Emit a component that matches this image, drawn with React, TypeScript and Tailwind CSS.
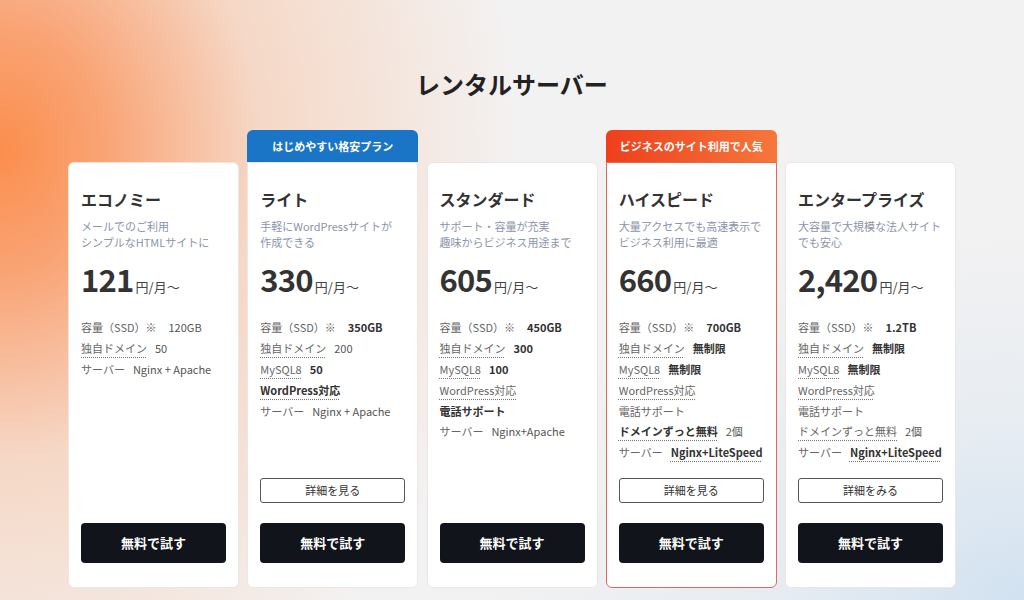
type Spec = {
  label: string
  value?: string
  labelBold?: boolean
  valueBold?: boolean
  dotted?: boolean
  valueDotted?: boolean
}

type Plan = {
  name: string
  desc: string[]
  price: string
  badge?: "blue" | "orange"
  badgeText?: string
  detail?: string
  specs: Spec[]
}

const plans: Plan[] = [
  {
    name: "エコノミー",
    desc: ["メールでのご利用", "シンプルなHTMLサイトに"],
    price: "121",
    specs: [
      { label: "容量（SSD）※", value: "120GB" },
      { label: "独自ドメイン", value: "50", dotted: true },
      { label: "サーバー", value: "Nginx + Apache" },
    ],
  },
  {
    name: "ライト",
    desc: ["手軽にWordPressサイトが", "作成できる"],
    price: "330",
    badge: "blue",
    badgeText: "はじめやすい格安プラン",
    detail: "詳細を見る",
    specs: [
      { label: "容量（SSD）※", value: "350GB", valueBold: true },
      { label: "独自ドメイン", value: "200", dotted: true },
      { label: "MySQL8", value: "50", dotted: true, valueBold: true },
      { label: "WordPress対応", dotted: true, labelBold: true },
      { label: "サーバー", value: "Nginx + Apache" },
    ],
  },
  {
    name: "スタンダード",
    desc: ["サポート・容量が充実", "趣味からビジネス用途まで"],
    price: "605",
    specs: [
      { label: "容量（SSD）※", value: "450GB", valueBold: true },
      { label: "独自ドメイン", value: "300", dotted: true, valueBold: true },
      { label: "MySQL8", value: "100", dotted: true, valueBold: true },
      { label: "WordPress対応", dotted: true },
      { label: "電話サポート", labelBold: true },
      { label: "サーバー", value: "Nginx+Apache" },
    ],
  },
  {
    name: "ハイスピード",
    desc: ["大量アクセスでも高速表示で", "ビジネス利用に最適"],
    price: "660",
    badge: "orange",
    badgeText: "ビジネスのサイト利用で人気",
    detail: "詳細を見る",
    specs: [
      { label: "容量（SSD）※", value: "700GB", valueBold: true },
      { label: "独自ドメイン", value: "無制限", dotted: true, valueBold: true },
      { label: "MySQL8", value: "無制限", dotted: true, valueBold: true },
      { label: "WordPress対応", dotted: true },
      { label: "電話サポート" },
      { label: "ドメインずっと無料", value: "2個", dotted: true, labelBold: true },
      { label: "サーバー", value: "Nginx+LiteSpeed", valueBold: true, valueDotted: true },
    ],
  },
  {
    name: "エンタープライズ",
    desc: ["大容量で大規模な法人サイト", "でも安心"],
    price: "2,420",
    detail: "詳細をみる",
    specs: [
      { label: "容量（SSD）※", value: "1.2TB", valueBold: true },
      { label: "独自ドメイン", value: "無制限", dotted: true, valueBold: true },
      { label: "MySQL8", value: "無制限", dotted: true, valueBold: true },
      { label: "WordPress対応", dotted: true },
      { label: "電話サポート" },
      { label: "ドメインずっと無料", value: "2個", dotted: true },
      { label: "サーバー", value: "Nginx+LiteSpeed", valueBold: true, valueDotted: true },
    ],
  },
]

const dottedCls = "underline decoration-dotted decoration-[#777] underline-offset-[4px]"

function SpecRow({ spec }: { spec: Spec }) {
  return (
    <div className="flex items-center gap-2 h-[20.8px] text-[11px] leading-[20px] whitespace-nowrap">
      <span
        className={`${spec.labelBold ? "font-bold text-[#333]" : "text-[#666]"} ${spec.dotted ? dottedCls : ""}`}
      >
        {spec.label}
      </span>
      {spec.value && (
        <span
          className={`${spec.valueBold ? "font-bold text-[#333]" : "text-[#555]"} ${spec.valueDotted ? dottedCls : ""} ${spec.label.startsWith("容量") ? "ml-1" : ""}`}
        >
          {spec.value}
        </span>
      )}
    </div>
  )
}

function PlanCard({ plan }: { plan: Plan }) {
  const hot = plan.badge === "orange"
  return (
    <div className="flex flex-col w-[171px]">
      {plan.badge ? (
        <div
          className={`h-8 rounded-t-md flex items-center justify-center text-white text-[11px] font-bold ${
            hot ? "bg-[linear-gradient(90deg,#ee3f1d,#f6773b)]" : "bg-[#1a75c6]"
          }`}
        >
          {plan.badgeText}
        </div>
      ) : (
        <div className="h-8" />
      )}
      <div
        className={`h-[426px] bg-white flex flex-col px-3 pt-6 pb-6 border ${
          plan.badge ? "rounded-b-md" : "rounded-md"
        } ${hot ? "border-[#df6a55]" : "border-[#ebe7e5]"}`}
      >
        <h3 className="text-[16px] leading-6 font-bold text-[#333]">{plan.name}</h3>
        <div className="mt-[7px] text-[11px] leading-4 text-[#8a94ab] whitespace-nowrap">
          {plan.desc.map((d) => (
            <p key={d}>{d}</p>
          ))}
        </div>
        <div className="mt-[9px] flex items-baseline h-10 text-[#333]">
          <span className="text-[31px] leading-10 font-bold tracking-tight">{plan.price}</span>
          <span className="text-[13px] ml-0.5 text-[#444]">円/月〜</span>
        </div>
        <div className="mt-[18px] flex flex-col">
          {plan.specs.map((s) => (
            <SpecRow key={s.label} spec={s} />
          ))}
        </div>
        <div className="mt-auto flex flex-col gap-5">
          {plan.detail && (
            <button className="h-[25px] w-full rounded-[3px] border border-[#555] text-[11px] text-[#333] bg-white">
              {plan.detail}
            </button>
          )}
          <button className="h-10 w-full rounded-[4px] bg-[#12141b] text-white text-[13px] font-bold">
            無料で試す
          </button>
        </div>
      </div>
    </div>
  )
}

export default function App() {
  return (
    <div className="w-[1024px] h-[600px] overflow-hidden font-['Noto_Sans_CJK_JP',sans-serif] bg-[#f3f2f2] bg-[radial-gradient(ellipse_520px_620px_at_0%_25%,#fb8e4d_0%,rgba(250,150,95,0.85)_20%,rgba(248,190,155,0.5)_50%,rgba(243,242,242,0)_100%),radial-gradient(ellipse_560px_380px_at_100%_100%,#d2e2f1_0%,rgba(222,232,242,0.6)_45%,rgba(243,242,242,0)_100%)]">
      <div className="flex flex-col items-center pt-[66px]">
        <h1 className="text-[24px] leading-9 font-bold text-[#222]">レンタルサーバー</h1>
        <div className="mt-7 flex gap-[8.25px] justify-center">
          {plans.map((p) => (
            <PlanCard key={p.name} plan={p} />
          ))}
        </div>
      </div>
    </div>
  )
}
